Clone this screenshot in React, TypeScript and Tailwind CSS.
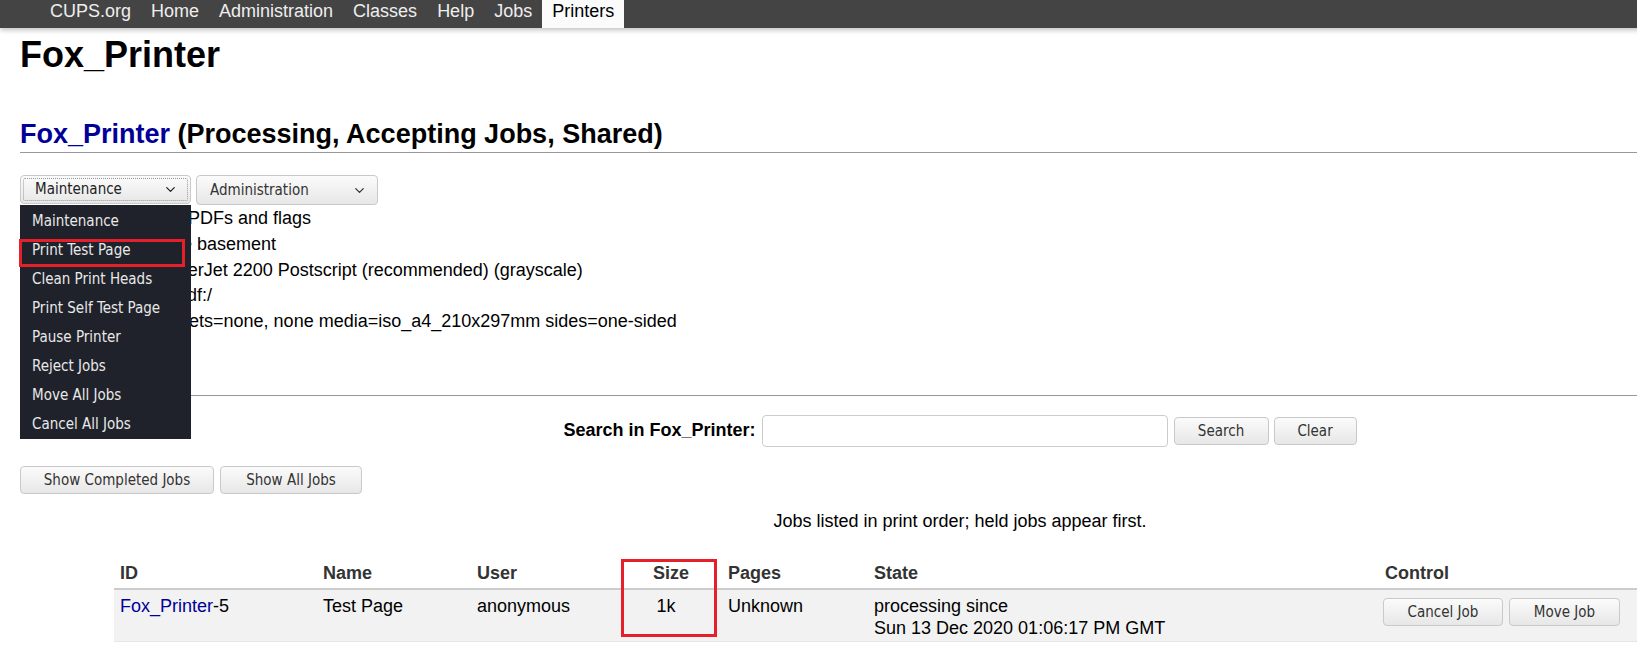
import { ChevronDown } from 'lucide-react';

const navItems = ['CUPS.org', 'Home', 'Administration', 'Classes', 'Help', 'Jobs'];

const menuItems = [
  'Maintenance',
  'Print Test Page',
  'Clean Print Heads',
  'Print Self Test Page',
  'Pause Printer',
  'Reject Jobs',
  'Move All Jobs',
  'Cancel All Jobs',
];

// values sit partly under the open menu; the offsets keep the visible cut where it is
const details = [
  { label: 'Description:', value: 'Prints PDFs and flags', shift: 'ml-0' },
  { label: 'Location:', value: 'House basement', shift: 'ml-[3px]' },
  { label: 'Driver:', value: 'HP LaserJet 2200 Postscript (recommended) (grayscale)', shift: '-ml-[8px]' },
  { label: 'Connection:', value: 'cups-pdf:/', shift: '-ml-[4px]' },
  { label: 'Defaults:', value: 'job-sheets=none, none media=iso_a4_210x297mm sides=one-sided', shift: '-ml-[7px]' },
];

const uiFont = "font-['DejaVu_Sans_Condensed','DejaVu_Sans',sans-serif] [font-stretch:condensed]";
const btnBase =
  'flex items-center rounded-[4px] border border-[#c9c9c9] bg-gradient-to-b from-[#fbfbfb] to-[#e7e7e7] text-[15px] text-[#333]';
const btn = `${btnBase} justify-center`;

export default function App() {
  return (
    <div className="h-screen w-screen overflow-hidden bg-white">
      <div className="w-[1920px] font-['Liberation_Sans',Arial,sans-serif] text-[18px] text-black">
        <nav className="flex h-[28px] bg-[#444] pl-[40px] shadow-[0_2px_5px_rgba(0,0,0,0.25)]">
          {navItems.map((item) => (
            <span key={item} className="px-[10px] leading-[22px] text-[#eee]">
              {item}
            </span>
          ))}
          <span className="h-[28px] bg-[#fbfbfb] px-[10px] leading-[22px] text-black">Printers</span>
        </nav>

        <div className="px-[20px]">
          <h1 className="mt-[7px] text-[36px] font-bold leading-[40px]">Fox_Printer</h1>
          <h2 className="mt-[43px] border-b border-[#999] pb-[2px] text-[27px] font-bold leading-[32px]">
            <span className="text-[#000099]">Fox_Printer</span> (Processing, Accepting Jobs, Shared)
          </h2>

          <div className="relative mt-[22px]">
            <div className={`flex gap-[5px] ${uiFont}`}>
              <div className={`${btnBase} h-[29px] w-[171px] p-[2px]`}>
                <div className="flex h-full w-full items-center justify-between rounded-[2px] border border-dotted border-[#999] pl-[11px] pr-[9px] text-[#222]">
                  <span>Maintenance</span>
                  <ChevronDown size={15} strokeWidth={2} />
                </div>
              </div>
              <div className={`${btnBase} h-[30px] w-[182px] justify-between pl-[13px] pr-[10px] text-[#222]`}>
                <span>Administration</span>
                <ChevronDown size={15} strokeWidth={2} />
              </div>
            </div>

            <div className="grid grid-cols-[110px_1fr] gap-x-[7px] pt-[1px]">
              {details.map((row) => (
                <div key={row.label} className="contents">
                  <span className="text-right font-bold leading-[25.75px]">{row.label}</span>
                  <span className={`leading-[25.75px] ${row.shift}`}>{row.value}</span>
                </div>
              ))}
            </div>

            <ul className={`absolute left-0 top-[30px] w-[171px] bg-[#20222b] pt-[2px] text-[15px] ${uiFont}`}>
              {menuItems.map((item) => (
                <li key={item} className="h-[29px] pl-[12px] leading-[29px] text-[#e8e8e8]">
                  {item}
                </li>
              ))}
              <li className="absolute left-[-1px] top-[34px] h-[28px] w-[166px] border-[3px] border-[#e5202a]" />
            </ul>
          </div>

          <div className="mt-[60px] border-t border-[#999]" />

          <div className="mt-[19px] flex items-center justify-center gap-[6px]">
            <span className="font-bold">Search in Fox_Printer:</span>
            <div className="h-[32px] w-[406px] rounded-[4px] border border-[#ccc] bg-white" />
            <div className={`flex gap-[5px] ${uiFont}`}>
              <div className={`${btn} h-[28px] w-[95px]`}>Search</div>
              <div className={`${btn} h-[28px] w-[83px]`}>Clear</div>
            </div>
          </div>

          <div className={`mt-[19px] flex gap-[6px] ${uiFont}`}>
            <div className={`${btn} h-[28px] w-[194px]`}>Show Completed Jobs</div>
            <div className={`${btn} h-[28px] w-[142px]`}>Show All Jobs</div>
          </div>

          <p className="mt-[16px] text-center leading-[22px]">Jobs listed in print order; held jobs appear first.</p>

          <div className="relative mx-auto mt-[27px] w-[90%]">
            <table className="w-full table-fixed border-collapse">
              <colgroup>
                <col className="w-[203px]" />
                <col className="w-[154px]" />
                <col className="w-[149px]" />
                <col className="w-[102px]" />
                <col className="w-[146px]" />
                <col className="w-[511px]" />
                <col />
              </colgroup>
              <thead>
                <tr className="h-[30px] border-b-2 border-[#ccc] text-left font-bold text-[#333]">
                  <th className="pl-[6px]">ID</th>
                  <th className="pl-[6px]">Name</th>
                  <th className="pl-[6px]">User</th>
                  <th className="text-center">Size</th>
                  <th className="pl-[6px]">Pages</th>
                  <th className="pl-[6px]">State</th>
                  <th className="pl-[6px]">Control</th>
                </tr>
              </thead>
              <tbody>
                <tr className="h-[53px] border-b border-[#e6e6e6] bg-[#f2f2f2] align-top leading-[22.5px]">
                  <td className="pl-[6px] pt-[5px]">
                    <span className="text-[#000099]">Fox_Printer</span>-5
                  </td>
                  <td className="pl-[6px] pt-[5px]">Test Page</td>
                  <td className="pl-[6px] pt-[5px]">anonymous</td>
                  <td className="pr-[10px] pt-[5px] text-center">1k</td>
                  <td className="pl-[6px] pt-[5px]">Unknown</td>
                  <td className="pl-[6px] pt-[5px]">
                    processing since
                    <br />
                    Sun 13 Dec 2020 01:06:17 PM GMT
                  </td>
                  <td className="pl-[4px] pt-[8px]">
                    <div className={`flex gap-[6px] ${uiFont}`}>
                      <div className={`${btn} h-[28px] w-[120px]`}>Cancel Job</div>
                      <div className={`${btn} h-[28px] w-[111px]`}>Move Job</div>
                    </div>
                  </td>
                </tr>
              </tbody>
            </table>
            <div className="absolute left-[507px] top-[0px] h-[78px] w-[96px] border-[3px] border-[#e5202a]" />
          </div>
        </div>
      </div>
    </div>
  );
}
